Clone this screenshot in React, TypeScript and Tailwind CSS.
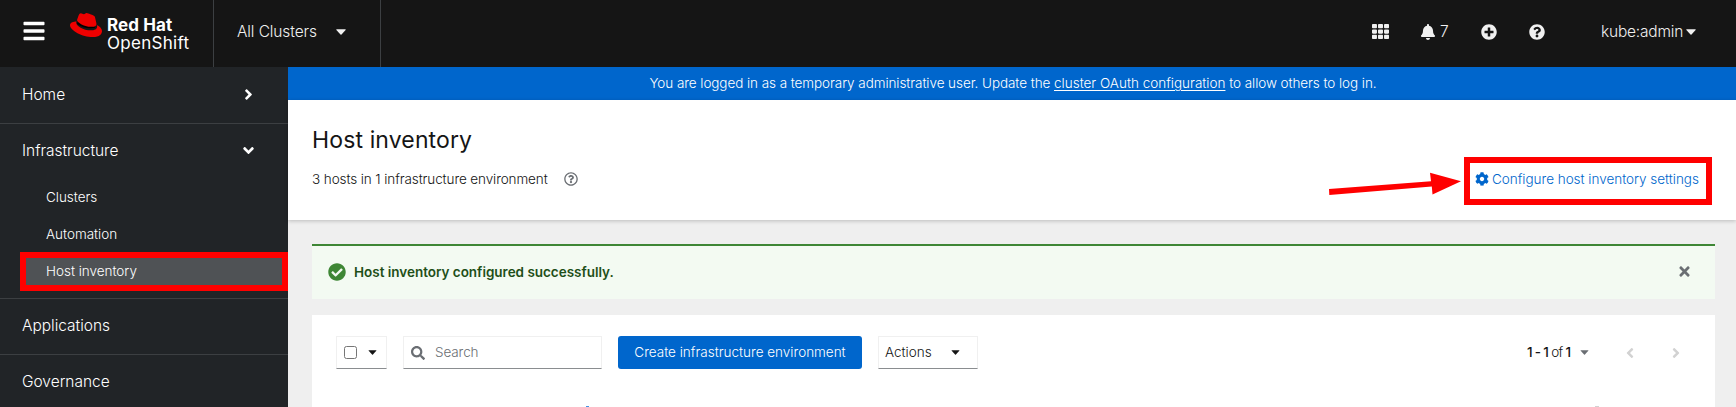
import React from 'react';
import {
  FaAngleDown,
  FaAngleLeft,
  FaAngleRight,
  FaBars,
  FaBell,
  FaCheckCircle,
  FaCog,
  FaPlusCircle,
  FaQuestionCircle,
  FaRedhat,
  FaRegQuestionCircle,
  FaSearch,
  FaTh,
  FaTimes,
} from 'react-icons/fa';

function Caret({ className }: { className: string }) {
  return (
    <svg viewBox="0 0 10 6" className={className} fill="currentColor">
      <path d="M.7 .2H9.3Q10 .3 9.6 1L5.5 5.4Q5 5.9 4.5 5.4L.4 1Q0 .3 .7 .2Z" />
    </svg>
  );
}

function Masthead() {
  return (
    <header className="flex h-[67px] shrink-0 items-center bg-[#151515] text-[15.5px] font-light text-[#f0f0f0]">
      <div className="flex h-full w-[213px] items-center pl-[22px]">
        <FaBars className="mt-[-5px] size-[24px] text-white" />
        <svg viewBox="0 0 512 512" className="mb-[18px] ml-[24px] size-[32px]">
          <path fill="#000" d="M125 190 400 215 400 300Q250 330 112 240Z" />
          <FaRedhat size={512} color="#ee0000" />
        </svg>
        <div className="mt-[1px] ml-[5px] flex flex-col text-[17px] leading-[18px] whitespace-nowrap text-white">
          <span className="font-bold tracking-[0.1px]">Red Hat</span>
          <span className="font-normal tracking-[0.3px]">OpenShift</span>
        </div>
      </div>
      <div className="flex h-full w-[168px] items-center border-x border-[#3c3f42] pl-[23px] tracking-[-0.1px]">
        <span className="mb-[3px] w-[80px] whitespace-nowrap">All Clusters</span>
        <Caret className="mb-[4px] ml-[19px] h-[6px] w-[10px]" />
      </div>
      <div className="ml-auto flex h-full items-center pb-[4px]">
        <FaTh className="mt-[-1px] size-[17px]" />
        <FaBell className="ml-[31px] size-[16px]" />
        <span className="ml-[4px] w-[10px]">7</span>
        <FaPlusCircle className="ml-[31px] size-[16px]" />
        <FaQuestionCircle className="ml-[32px] size-[16px]" />
        <span className="ml-[56px] w-[82px] tracking-[-0.2px] whitespace-nowrap">kube:admin</span>
        <Caret className="mt-[1px] mr-[40px] ml-[3px] h-[6px] w-[10px]" />
      </div>
    </header>
  );
}

function Sidebar() {
  return (
    <nav className="relative flex w-[288px] shrink-0 flex-col bg-[#212427] text-[15.5px] font-light tracking-[-0.02px] text-white">
      <div className="flex h-[57px] shrink-0 items-center justify-between border-b border-[#3c3f42] pr-[31px] pl-[22px]">
        <span>Home</span>
        <FaAngleRight className="mb-[2px] size-[17px]" />
      </div>
      <div className="shrink-0 border-b border-[#3c3f42] pb-[8px]">
        <div className="flex h-[55px] items-center justify-between pr-[31px] pb-[2px] pl-[22px]">
          <span>Infrastructure</span>
          <FaAngleDown className="size-[17px]" />
        </div>
        <ul className="text-[13.5px]">
          <li className="flex h-[37px] items-center pl-[46px]">Clusters</li>
          <li className="flex h-[37px] items-center pl-[46px]">Automation</li>
          <li className="flex h-[37px] items-center bg-[#4f5255] bg-clip-content pl-[20px]">
            <span className="flex h-full items-center pl-[26px]">Host inventory</span>
          </li>
        </ul>
      </div>
      <div className="flex h-[56px] shrink-0 items-center border-b border-[#3c3f42] pb-[2px] pl-[22px]">Applications</div>
      <div className="flex h-[53px] shrink-0 items-center pl-[22px]">Governance</div>
      <div className="absolute top-[185px] left-[20px] h-[39px] w-[268px] border-[6px] border-[#ff0000]" />
    </nav>
  );
}

function LoginBanner() {
  return (
    <div className="flex h-[33px] shrink-0 items-center justify-center bg-[#0066cc] pl-[2px] text-[13.5px] font-light tracking-[-0.07px] whitespace-pre text-white">
      <span>You are logged in as a temporary administrative user. Update the </span>
      <a className="tracking-[0px] underline underline-offset-2">cluster OAuth configuration</a>
      <span> to allow others to log in.</span>
    </div>
  );
}

function PageHeader() {
  return (
    <section className="relative z-10 h-[120px] shrink-0 bg-white pt-[23px] pr-[37px] pl-[24px] text-[#151515] shadow-[0_1px_4px_rgba(3,3,3,0.22)]">
      <h1 className="text-[23px] leading-[35px] font-normal tracking-[0.13px]">Host inventory</h1>
      <div className="mt-[10px] flex h-[22px] items-center text-[13.5px]">
        <span className="w-[236px] font-light tracking-[-0.1px] whitespace-nowrap">
          3 hosts in 1 infrastructure environment
        </span>
        <FaRegQuestionCircle className="ml-[16px] size-[14px] text-[#6a6e73]" />
        <a className="ml-auto flex items-center gap-[3px] font-light whitespace-nowrap text-[#0066cc]">
          <FaCog className="size-[14px]" />
          <span className="w-[207px] tracking-[-0.02px]">Configure host inventory settings</span>
        </a>
      </div>
      <svg className="absolute top-[70px] right-[270px] h-[28px] w-[140px]" viewBox="1326 170 140 28">
        <path fill="#ff0000" d="M1329 189 1431 181.2 1430 172.8 1461 181.2 1432.5 194.5 1431.8 186.6 1329.3 195Z" />
      </svg>
      <div className="absolute top-[57px] right-[24px] h-[48px] w-[248px] border-[6px] border-[#ff0000]" />
    </section>
  );
}

function SuccessAlert() {
  return (
    <div className="flex h-[55px] items-center border-t-2 border-[#3e8635] bg-[#f3faf2] pr-[23px] pb-[1px] pl-[16px]">
      <FaCheckCircle className="size-[18px] text-[#3e8635]" />
      <span className="ml-[8px] text-[13.5px] font-semibold tracking-[-0.02px] text-[#1e4f18]">
        Host inventory configured successfully.
      </span>
      <FaTimes className="mb-[2px] ml-auto size-[15px] text-[#6a6e73]" />
    </div>
  );
}

function Toolbar() {
  return (
    <div className="flex h-[33px] items-center text-[13.5px] font-light text-[#151515]">
      <div className="flex h-full w-[51px] items-center border border-[#f0f0f0] border-b-[#8a8d90] pl-[7px]">
        <span className="size-[13px] rounded-[2.5px] border border-[#767676] bg-white" />
        <Caret className="ml-[11px] h-[5px] w-[9px]" />
      </div>
      <div className="ml-[16px] flex h-full w-[199px] items-center border border-[#f0f0f0] border-b-[#8a8d90] pl-[7px] text-[#6a6e73]">
        <FaSearch className="size-[14px]" />
        <span className="ml-[10px] tracking-[-0.1px]">Search</span>
      </div>
      <button className="ml-[16px] flex h-full w-[244px] items-center justify-center rounded-[3px] bg-[#0066cc] whitespace-nowrap text-white">
        Create infrastructure environment
      </button>
      <div className="ml-[16px] flex h-full w-[100px] items-center border border-[#f0f0f0] border-b-[#8a8d90] pl-[6px]">
        <span className="w-[47px]">Actions</span>
        <Caret className="ml-[19px] h-[5px] w-[9px]" />
      </div>
      <div className="ml-auto flex items-center">
        <span className="w-[44px] tracking-[-0.7px] whitespace-nowrap">
          <b className="font-medium">1 - 1</b> of <b className="font-medium">1</b>
        </span>
        <Caret className="ml-[9px] h-[5px] w-[9px] text-[#6a6e73]" />
        <FaAngleLeft className="ml-[33px] size-[16px] text-[#d2d2d2]" />
        <FaAngleRight className="mr-[31px] ml-[30px] size-[16px] text-[#d2d2d2]" />
      </div>
    </div>
  );
}

export default function App() {
  return (
    <div className="flex h-[407px] flex-col overflow-hidden bg-white font-['Inter',sans-serif]">
      <Masthead />
      <div className="flex min-h-0 flex-1">
        <Sidebar />
        <main className="flex min-w-0 flex-1 flex-col bg-[#efefef]">
          <LoginBanner />
          <PageHeader />
          <div className="flex min-h-0 flex-1 flex-col gap-[16px] pt-[24px] pr-[21px] pl-[24px]">
            <SuccessAlert />
            <section className="flex flex-1 flex-col justify-between bg-white pt-[21px] pl-[24px]">
              <Toolbar />
              <div className="flex h-[1px] justify-between pr-[116px] pl-[250px]">
                <span className="w-[3px] bg-[#4394e5]" />
                <span className="w-[4px] bg-[#d2d2d2]" />
              </div>
            </section>
          </div>
        </main>
      </div>
    </div>
  );
}
